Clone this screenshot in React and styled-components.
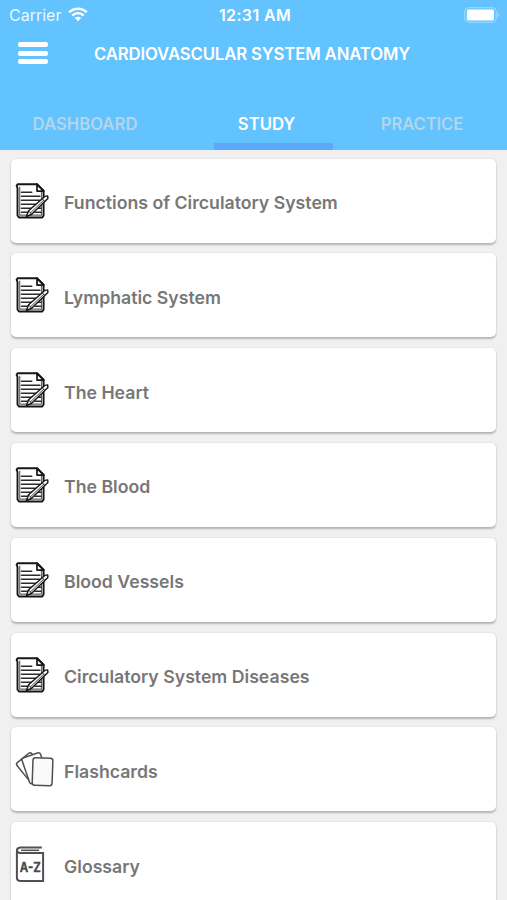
import React from "react";
import styled, { createGlobalStyle } from "styled-components";

const GlobalStyle = createGlobalStyle`
  * { box-sizing: border-box; }
  html, body { margin: 0; overflow: hidden; }
  body { background: #f0f0f0; font-family: Inter, "Liberation Sans", sans-serif; }
`;

const Screen = styled.div`
  width: 507px;
  height: 900px;
  overflow: hidden;
  background: #f0f0f0;
`;

const Header = styled.header`
  height: 150.4px;
  background: #62c3ff;
  color: #fff;
  display: flex;
  flex-direction: column;
`;

const StatusBar = styled.div`
  height: 29px;
  display: grid;
  grid-template-columns: 1fr auto 1fr;
  align-items: center;
  padding: 0 7px 0 9px;
  line-height: 20px;
`;

const Carrier = styled.div`
  display: flex;
  align-items: center;
  gap: 7px;
  font-size: 16px;
  letter-spacing: 0;
  color: #e9f7ff;
`;

const Clock = styled.div`
  font-size: 16px;
  font-weight: 600;
  letter-spacing: 0.35px;
  padding-left: 1px;
`;

const BatterySlot = styled.div`
  display: flex;
  justify-content: flex-end;
`;

const NavBar = styled.div`
  height: 69px;
  display: flex;
  align-items: flex-start;
  padding: 12px 0 0 18px;
`;

const MenuButton = styled.button`
  width: 30px;
  height: 24px;
  padding: 1px 0;
  border: 0;
  background: none;
  display: flex;
  flex-direction: column;
  justify-content: space-between;
`;

const MenuLine = styled.span`
  height: 5px;
  border-radius: 2px;
  background: #fff;
`;

const Title = styled.h1`
  margin: 1px 0 0 46px;
  font-size: 16.8px;
  font-weight: 600;
  line-height: 24px;
  letter-spacing: -0.17px;
  white-space: nowrap;
`;

const Tabs = styled.nav`
  flex: 1;
  display: grid;
  grid-template-columns: 170px 1fr 170px;
`;

const Tab = styled.div`
  display: flex;
  flex-direction: column;
  justify-content: space-between;
  padding-top: 16px;
  text-align: center;
  font-size: 16.7px;
  line-height: 20px;
  font-weight: 600;
  letter-spacing: ${(p) => p.$tracking || 0}px;
  color: ${(p) => (p.$active ? "#fff" : "#b3d6ea")};
`;

const ActiveLabel = styled.span`
  padding-left: 26px;
`;

const Indicator = styled.div`
  width: 119px;
  height: 7px;
  margin-left: 44px;
  background: #5ca7f7;
`;

const List = styled.main`
  display: flex;
  flex-direction: column;
  gap: 10.8px;
  padding: 8.2px 11px 0;
`;

const Card = styled.div`
  height: 84px;
  flex: none;
  display: flex;
  align-items: center;
  background: #fff;
  border-radius: 5px;
  box-shadow: 0 1.5px 2px rgba(0, 0, 0, 0.24), 0 0 2px rgba(0, 0, 0, 0.08);
`;

const IconSlot = styled.div`
  width: 53px;
  height: 48px;
  flex: none;
  svg { display: block; }
`;

const Label = styled.span`
  padding-top: 4.8px;
  color: #777;
  font-size: 17.7px;
  line-height: 24px;
  font-weight: 600;
  letter-spacing: 0;
  white-space: nowrap;
`;

const WifiIcon = () => (
  <svg width="20" height="15" viewBox="0 0 20 15" fill="none" stroke="#fff" strokeWidth="2.6">
    <path d="M1.2 5.2C6.2.5 13.8.5 18.8 5.2M4.3 8.5c3.4-3 8-3 11.4 0" />
    <path d="M6.8 11c2-1.7 4.4-1.7 6.4 0L10 14.2Z" fill="#fff" stroke="none" />
  </svg>
);

const BatteryIcon = () => (
  <svg width="36" height="16" viewBox="0 0 36 16">
    <rect x=".8" y=".8" width="31.4" height="14.4" rx="3.4" fill="none" stroke="#a5dcff" strokeWidth="1" />
    <rect x="2.8" y="2.6" width="27.2" height="10.8" rx="1.6" fill="#fff" />
    <path d="M33.7 5.5q2.6 2.5 0 5Z" fill="#a5dcff" />
  </svg>
);

const NoteIcon = () => (
  <svg width="50" height="50" viewBox="0 0 50 50" fill="none" stroke="#161616" strokeLinejoin="round" strokeLinecap="round">
    <path d="M5.6 8.7 6.8 7.2H26l6.6 6.5v24.8l-1.3 2H8l-1.5-2V11Z" strokeWidth="1.9" />
    <path d="M8.7 10v28.2h21.8V14" stroke="#666" strokeWidth="1.2" />
    <path d="M26 7.2v6.9h6.8Z" strokeWidth="1.7" />
    <path d="M10.5 15.3h10.2M10.5 19.3h18.3M10.5 23.3h18.3M10.5 27.3h15.5M10.5 31.3h11.6M10.5 35.3h8.5M27 31.3h3M24 35.3h6" stroke="#2b2b2b" strokeWidth="1.6" />
    <path d="m15.4 39.5 2.2-5.8L33.8 19.4l2.9-.5.2 2.6L20.4 37.5Z" fill="#fff" strokeWidth="1.4" />
    <path d="m19.1 36.2 13.7-13.1M31.2 21.8l2.6 2.4M17.8 34l2.5 3" strokeWidth=".8" />
  </svg>
);

const CardsIcon = () => (
  <svg width="50" height="50" viewBox="0 0 50 50" fill="#fff" stroke="#505050" strokeWidth="1.5">
    <rect x="10.7" y="10" width="19" height="26" rx="2.5" transform="rotate(-39 20.2 23)" />
    <rect x="14.3" y="9.6" width="19.5" height="27.4" rx="2.5" transform="rotate(-19 24 23.3)" />
    <rect x="21.6" y="13" width="19.9" height="27.6" rx="2.6" fill="#fafafa" transform="rotate(2 31.5 26.4)" />
  </svg>
);

const LetterMark = styled.text`
  font-family: Inter, sans-serif;
  font-size: 13px;
  font-weight: 700;
  fill: #484848;
  stroke: #484848;
  stroke-width: 0.3px;
`;

const BookIcon = () => (
  <svg width="50" height="50" viewBox="0 0 50 50" fill="none" stroke="#505050" strokeWidth="2">
    <path d="M30.8 7.4H9.2Q5.9 7.7 5.9 10.8v27q0 3.1 3 3.1h23.2V13.1H9.4q-3.2 0-3.2-2.6" />
    <path d="M10 10.3h18" strokeWidth="1.5" />
    <LetterMark x="8.8" y="31.6" textLength="21" lengthAdjust="spacingAndGlyphs">A-Z</LetterMark>
  </svg>
);

const items = [
  { label: "Functions of Circulatory System" },
  { label: "Lymphatic System" },
  { label: "The Heart" },
  { label: "The Blood" },
  { label: "Blood Vessels" },
  { label: "Circulatory System Diseases" },
  { label: "Flashcards", Icon: CardsIcon },
  { label: "Glossary", Icon: BookIcon },
];

export default function App() {
  return (
    <Screen>
      <GlobalStyle />
      <Header>
        <StatusBar>
          <Carrier>Carrier <WifiIcon /></Carrier>
          <Clock>12:31 AM</Clock>
          <BatterySlot><BatteryIcon /></BatterySlot>
        </StatusBar>
        <NavBar>
          <MenuButton aria-label="Menu"><MenuLine /><MenuLine /><MenuLine /></MenuButton>
          <Title>CARDIOVASCULAR SYSTEM ANATOMY</Title>
        </NavBar>
        <Tabs>
          <Tab>DASHBOARD</Tab>
          <Tab $active><ActiveLabel>STUDY</ActiveLabel><Indicator /></Tab>
          <Tab $tracking={-0.15}>PRACTICE</Tab>
        </Tabs>
      </Header>
      <List>
        {items.map(({ label, Icon = NoteIcon }) => (
          <Card key={label}>
            <IconSlot><Icon /></IconSlot>
            <Label>{label}</Label>
          </Card>
        ))}
      </List>
    </Screen>
  );
}
